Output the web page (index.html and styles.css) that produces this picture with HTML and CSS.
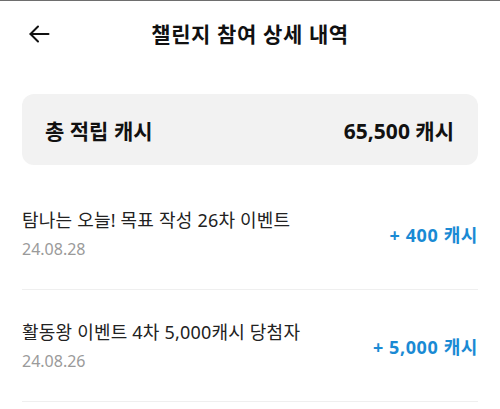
FILE: index.html
```html
<!DOCTYPE html>
<html lang="ko">
<head>
    <meta charset="UTF-8">
    <meta name="viewport" content="width=device-width, initial-scale=1.0">
    <title>챌린지 참여 상세 내역</title>
    <link rel="stylesheet" href="styles.css">
</head>
<body>
    <header class="top-bar">
        <button class="back-btn" aria-label="뒤로">
            <svg width="24" height="24" viewBox="0 0 24 24" fill="none" stroke="#111" stroke-width="2" stroke-linecap="round" stroke-linejoin="round">
                <path d="M21.5 12H3.5"/>
                <path d="M11 4.5L3.5 12l7.5 7.5"/>
            </svg>
        </button>
        <h1 class="title">챌린지 참여 상세 내역</h1>
    </header>

    <div class="summary">
        <span>총 적립 캐시</span>
        <span>65,500 캐시</span>
    </div>

    <ul class="history">
        <li class="history-item">
            <div class="info">
                <p class="name">탐나는 오늘! 목표 작성 26차 이벤트</p>
                <p class="date">24.08.28</p>
            </div>
            <span class="amount">+ 400 캐시</span>
        </li>
        <li class="history-item">
            <div class="info">
                <p class="name">활동왕 이벤트 4차 5,000캐시 당첨자</p>
                <p class="date">24.08.26</p>
            </div>
            <span class="amount">+ 5,000 캐시</span>
        </li>
    </ul>
</body>
</html>
```

FILE: styles.css
```css
body {
    margin: 0;
    border-top: 1px solid #6e6e6e;
    background-color: #fff;
    color: #111;
    font-family: "Noto Sans", "Noto Sans CJK KR", sans-serif;
}
.top-bar {
    position: relative;
    height: 64px;
    display: flex;
    align-items: center;
    justify-content: center;
}
.back-btn {
    position: absolute;
    left: 27px;
    top: 21px;
    padding: 0;
    border: none;
    background: none;
    display: flex;
}
.title {
    margin: 0;
    font-size: 21px;
    font-weight: 700;
    letter-spacing: 0.6px;
}
.summary {
    margin: 29px 22px 0;
    height: 71px;
    padding: 0 24px 0 23px;
    display: flex;
    align-items: center;
    justify-content: space-between;
    background-color: #f2f2f2;
    border-radius: 12px;
    font-size: 21px;
    font-weight: 700;
}
.history {
    list-style: none;
    margin: 13px 22px 0;
    padding: 0;
}
.history-item {
    height: 111px;
    display: flex;
    align-items: center;
    justify-content: space-between;
    border-bottom: 1px solid #efefef;
}
.name {
    margin: 0;
    font-size: 18px;
    line-height: 24px;
    letter-spacing: 0.2px;
    color: #222;
}
.date {
    margin: 6px 0 0;
    font-size: 16px;
    line-height: 22px;
    color: #9a9a9a;
}
.amount {
    font-size: 18px;
    font-weight: 700;
    letter-spacing: 0.6px;
    color: #1a8ad4;
}
```
